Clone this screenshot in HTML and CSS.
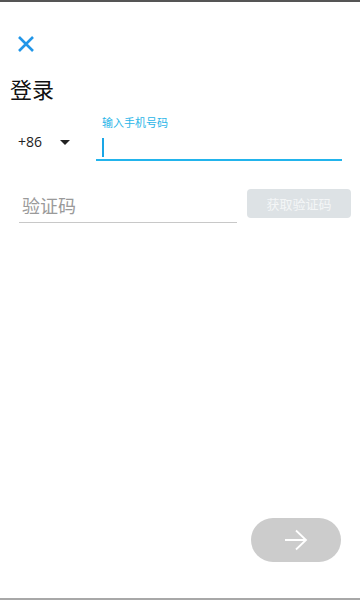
FILE: index.html
```html
<!DOCTYPE html>
<html>
<head>
<meta charset="utf-8">
<link rel="stylesheet" href="styles.css">
</head>
<body>
<div class="screen">
  <div class="topbar"></div>
  <div class="content">
    <div class="close">
      <svg width="18" height="18" viewBox="0 0 18 18"><path d="M2 2L16 16M16 2L2 16" stroke="#2196e8" stroke-width="2.6" stroke-linecap="butt"/></svg>
    </div>
    <h1 class="title">登录</h1>
    <div class="phone-row">
      <div class="country">
        <span class="code">+86</span>
        <span class="caret"></span>
      </div>
      <div class="phone-field">
        <div class="label">输入手机号码</div>
        <div class="input"><span class="cursor"></span></div>
      </div>
    </div>
    <div class="code-row">
      <div class="code-field">验证码</div>
      <button class="get-code">获取验证码</button>
    </div>
  </div>
  <div class="next">
    <svg width="26" height="22" viewBox="0 0 26 22"><path d="M2 11H23M13 1.5L23 11L13 20.5" fill="none" stroke="#fff" stroke-width="1.8"/></svg>
  </div>
  <div class="bottombar"></div>
</div>
</body>
</html>
```
FILE: styles.css
```css
* { box-sizing: border-box; }
html, body { margin: 0; padding: 0; background: #fff; }
body { font-family: "Noto Sans CJK SC", "Noto Sans", sans-serif; }
.screen {
  width: 360px;
  height: 600px;
  position: relative;
  display: flex;
  flex-direction: column;
  overflow: hidden;
}
.topbar { height: 2px; background: #555; flex: none; }
.content { flex: 1; padding: 0; }
.close {
  margin: 33px 0 0 17px;
  width: 18px;
  height: 18px;
  display: flex;
}
.title {
  margin: 21px 0 0 10px;
  font-size: 22px;
  font-weight: 400;
  line-height: 29px;
  color: #111;
}
.phone-row {
  display: flex;
  margin-top: 12px;
  align-items: flex-start;
}
.country {
  width: 96px;
  display: flex;
  align-items: center;
  padding: 17px 0 0 18px;
}
.code {
  font-family: "Open Sans", "Noto Sans", sans-serif;
  font-size: 14px;
  color: #222;
  line-height: 20px;
}
.caret {
  width: 0; height: 0;
  border-left: 5px solid transparent;
  border-right: 5px solid transparent;
  border-top: 5px solid #222;
  margin-left: 18px;
}
.phone-field {
  width: 246px;
}
.label {
  font-size: 11px;
  line-height: 14px;
  color: #2ab5e8;
  padding-left: 6px;
}
.input {
  height: 32px;
  border-bottom: 2px solid #22b4ec;
  padding: 9px 0 0 6px;
}
.cursor {
  display: block;
  width: 2px;
  height: 19px;
  background: #1aa6e6;
}
.code-row {
  display: flex;
  margin-top: 28px;
  align-items: flex-start;
}
.code-field {
  margin-left: 19px;
  width: 218px;
  height: 34px;
  border-bottom: 1px solid #c8c8c8;
  font-size: 18px;
  line-height: 32px;
  color: #9a9a9a;
  padding-left: 3px;
}
.get-code {
  margin-left: 10px;
  width: 104px;
  height: 29px;
  border: 0;
  border-radius: 4px;
  background: #dde2e5;
  color: #f4f6f7;
  font-family: "Noto Sans CJK SC", sans-serif;
  font-size: 13px;
  padding: 0;
}
.next {
  position: absolute;
  left: 251px;
  top: 518px;
  width: 90px;
  height: 44px;
  border-radius: 22px;
  background: #cccccc;
  display: flex;
  align-items: center;
  justify-content: center;
}
.bottombar {
  position: absolute;
  left: 0; right: 0; bottom: 0;
  height: 2px;
  background: #a8a8a8;
}
```
